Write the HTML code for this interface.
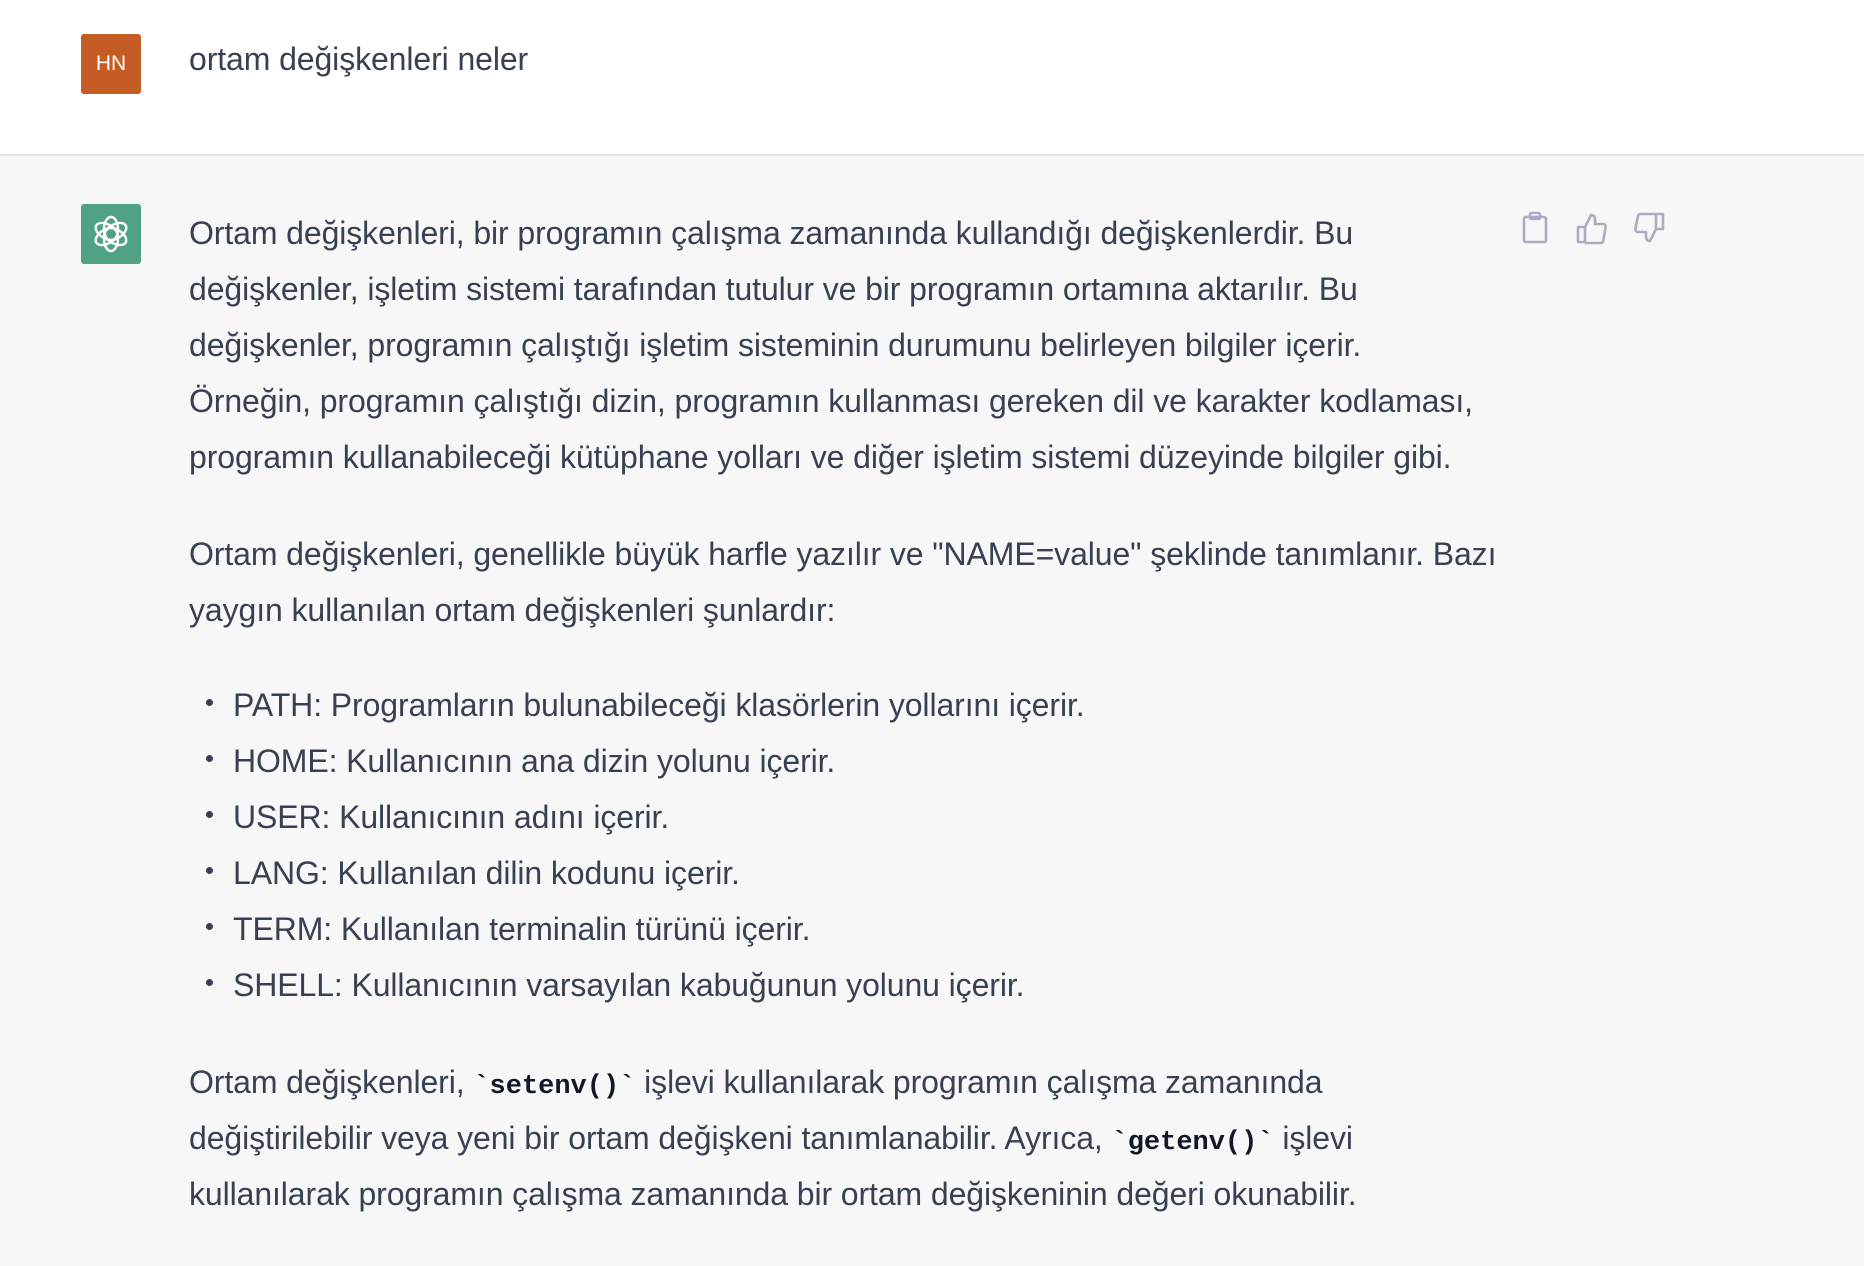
<!DOCTYPE html>
<html><head><meta charset="utf-8"><style>
html,body{margin:0;padding:0}
body{width:1864px;height:1266px;overflow:hidden;background:#f7f7f8;font-family:"Liberation Sans",sans-serif;color:#374151;position:relative}
.top{position:absolute;left:0;top:0;width:1864px;height:154px;background:#fff;border-bottom:2px solid #e3e3e6}
.av{position:absolute;width:60px;height:60px;border-radius:3px;left:81px}
.t{position:absolute;left:189px;font-size:32px;letter-spacing:-0.1px;line-height:56px;white-space:nowrap}
code{font-family:"Liberation Mono",monospace;font-weight:bold;font-size:27px;color:#111827;letter-spacing:0;line-height:0}
.li{position:relative;padding-left:44px}
.li:before{content:"";position:absolute;left:17px;top:22px;width:7px;height:7px;border-radius:50%;background:#374151}
svg.ic{position:absolute;top:211px}
</style></head><body>
<div class="top"></div>
<div class="av" style="top:34px;background:#c55b25;color:#fff;font-size:21px;text-align:center;line-height:60px">HN</div>
<div class="t" style="top:31px">ortam değişkenleri neler</div>
<div class="av" style="top:204px;background:#4fa282">
<svg width="60" height="60" viewBox="0 0 60 60" fill="none" stroke="#fff" stroke-width="2.4">
<g transform="translate(30 30)">
<ellipse rx="7" ry="12" transform="rotate(0) translate(0 -5)"/>
<ellipse rx="7" ry="12" transform="rotate(60) translate(0 -5)"/>
<ellipse rx="7" ry="12" transform="rotate(120) translate(0 -5)"/>
<ellipse rx="7" ry="12" transform="rotate(180) translate(0 -5)"/>
<ellipse rx="7" ry="12" transform="rotate(240) translate(0 -5)"/>
<ellipse rx="7" ry="12" transform="rotate(300) translate(0 -5)"/>
</g></svg></div>
<svg class="ic" style="left:1520px" width="30" height="34" viewBox="0 0 30 34" fill="none" stroke="#acacbe" stroke-width="2.6" stroke-linejoin="round"><rect x="4" y="6" width="22" height="25" rx="2"/><rect x="10" y="2" width="10" height="6" rx="1.5"/></svg>
<svg class="ic" style="left:1575px" width="34" height="34" viewBox="0 0 34 34" fill="none" stroke="#acacbe" stroke-width="2.6" stroke-linejoin="round"><path d="M3 16h7v15H3z M10 16l6-12c3 0 4 2 4 4v5h8c2 0 3 2 2.6 3.5l-2.3 13c-.3 1.5-1.5 2.5-3 2.5H10"/></svg>
<svg class="ic" style="left:1632px" width="34" height="34" viewBox="0 0 34 34" fill="none" stroke="#acacbe" stroke-width="2.6" stroke-linejoin="round"><path d="M31 3h-7v15h7z M24 18l-6 12c-3 0-4-2-4-4v-5H6c-2 0-3-2-2.6-3.5l2.3-11C6 4 7.2 3 8.7 3H24"/></svg>
<div class="t" style="top:205px">Ortam değişkenleri, bir programın çalışma zamanında kullandığı değişkenlerdir. Bu<br>değişkenler, işletim sistemi tarafından tutulur ve bir programın ortamına aktarılır. Bu<br>değişkenler, programın çalıştığı işletim sisteminin durumunu belirleyen bilgiler içerir.<br>Örneğin, programın çalıştığı dizin, programın kullanması gereken dil ve karakter kodlaması,<br>programın kullanabileceği kütüphane yolları ve diğer işletim sistemi düzeyinde bilgiler gibi.</div>
<div class="t" style="top:526px">Ortam değişkenleri, genellikle büyük harfle yazılır ve "NAME=value" şeklinde tanımlanır. Bazı<br>yaygın kullanılan ortam değişkenleri şunlardır:</div>
<div class="t" style="top:677px">
<div class="li">PATH: Programların bulunabileceği klasörlerin yollarını içerir.</div>
<div class="li">HOME: Kullanıcının ana dizin yolunu içerir.</div>
<div class="li">USER: Kullanıcının adını içerir.</div>
<div class="li">LANG: Kullanılan dilin kodunu içerir.</div>
<div class="li">TERM: Kullanılan terminalin türünü içerir.</div>
<div class="li">SHELL: Kullanıcının varsayılan kabuğunun yolunu içerir.</div>
</div>
<div class="t" style="top:1054px">Ortam değişkenleri, <code>`setenv()`</code> işlevi kullanılarak programın çalışma zamanında<br>değiştirilebilir veya yeni bir ortam değişkeni tanımlanabilir. Ayrıca, <code>`getenv()`</code> işlevi<br>kullanılarak programın çalışma zamanında bir ortam değişkeninin değeri okunabilir.</div>
</body></html>
